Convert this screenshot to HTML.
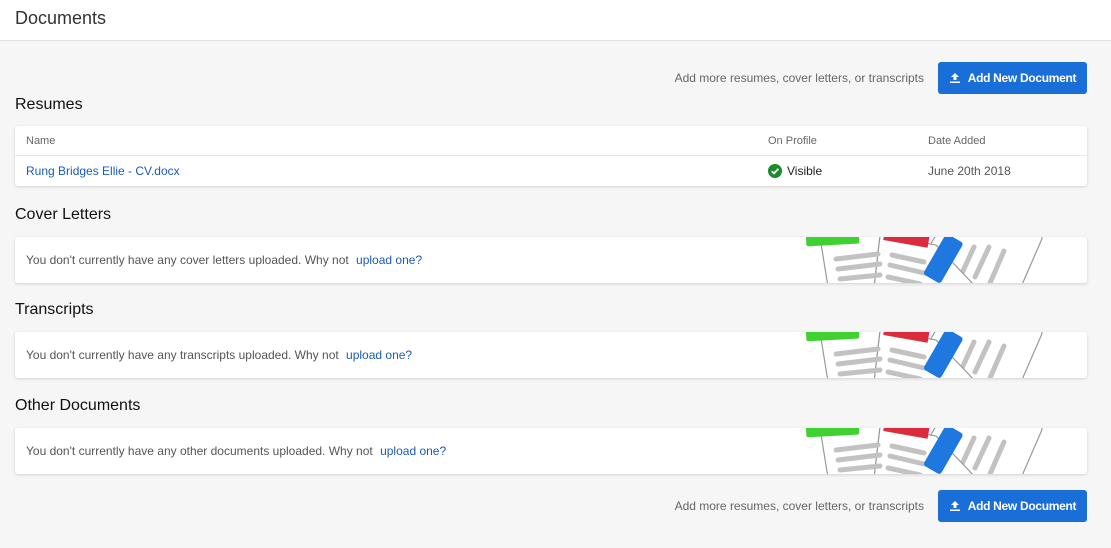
<!DOCTYPE html>
<html><head><meta charset="utf-8"><style>
*{margin:0;padding:0;box-sizing:border-box}
body{width:1111px;height:548px;background:#f6f6f6;font-family:"Liberation Sans",Arial,sans-serif;position:relative;overflow:hidden;color:#222}
.top{position:absolute;left:0;top:0;width:1111px;height:41px;background:#fff;border-bottom:1px solid #e2e2e2}
.top h1{position:absolute;left:15px;top:8px;font-size:18px;font-weight:normal;color:#333}
.addrow{position:absolute;right:24px;height:32px;display:flex;align-items:center}
.addrow span{font-size:12px;color:#666;margin-right:14px}
.btn{background:#1a6ed8;color:#fff;font-weight:bold;font-size:12px;height:32px;width:149px;border-radius:3px;display:flex;align-items:center;justify-content:center;letter-spacing:-0.3px}
.btn svg{margin-right:7px}
h2{position:absolute;left:15px;font-size:16px;font-weight:normal;color:#111}
.card{position:absolute;left:15px;width:1072px;background:#fff;border-radius:3px;box-shadow:0 1px 3px rgba(0,0,0,.15);overflow:hidden}
.th{height:30px;border-bottom:1px solid #e6e6e6;font-size:11px;color:#666;position:relative}
.th div,.tr div{position:absolute;top:0;line-height:30px}
.tr{height:30px;position:relative;font-size:12px}
a{color:#1a5bb8;text-decoration:none}
.empty{height:46px;font-size:12px;color:#555;line-height:46px;padding-left:11px}
.empty a{margin-left:4px}
.ill{position:absolute;left:761px;top:0}
</style></head><body>
<div class="top"><h1>Documents</h1></div>
<div class="addrow" style="top:62px"><span>Add more resumes, cover letters, or transcripts</span><div class="btn"><svg width="12" height="12" viewBox="0 0 12 12"><path d="M6 1L2 5h2.5v3h3V5H10z M1 9.5h10V11H1z" fill="#fff"/></svg>Add New Document</div></div>
<h2 style="top:96px">Resumes</h2>
<div class="card" style="top:126px;height:60px">
<div class="th"><div style="left:11px">Name</div><div style="left:753px">On Profile</div><div style="left:913px">Date Added</div></div>
<div class="tr"><div style="left:11px"><a>Rung Bridges Ellie - CV.docx</a></div>
<div style="left:753px;display:flex;align-items:center;height:30px"><svg width="14" height="14" viewBox="0 0 14 14" style="margin-right:5px"><circle cx="7" cy="7" r="7" fill="#1e8a2e"/><path d="M3.8 7.2l2.2 2.2 4.3-4.5" stroke="#fff" stroke-width="1.8" fill="none"/></svg>Visible</div>
<div style="left:913px;color:#555">June 20th 2018</div></div>
</div>
<h2 style="top:206px">Cover Letters</h2>
<div class="card" style="top:237px"><div class="empty">You don't currently have any cover letters uploaded. Why not <a>upload one?</a></div>ILL</div>
<h2 style="top:301px">Transcripts</h2>
<div class="card" style="top:332px"><div class="empty">You don't currently have any transcripts uploaded. Why not <a>upload one?</a></div>ILL</div>
<h2 style="top:397px">Other Documents</h2>
<div class="card" style="top:428px"><div class="empty">You don't currently have any other documents uploaded. Why not <a>upload one?</a></div>ILL</div>
<div class="addrow" style="top:490px"><span>Add more resumes, cover letters, or transcripts</span><div class="btn"><svg width="12" height="12" viewBox="0 0 12 12"><path d="M6 1L2 5h2.5v3h3V5H10z M1 9.5h10V11H1z" fill="#fff"/></svg>Add New Document</div></div>
<script>
var s='<svg class="ill" width="270" height="46" viewBox="0 0 270 46">'+
'<path d="M160 -2 L262 -2 Q268 -2 265 4 L245 50 L130 50 Z" fill="#fff" stroke="#999" stroke-width="1.2"/>'+
'<path d="M198 10 L186 36 M213 10 L199 40 M228 14 L214 46" stroke="#c2c2c2" stroke-width="5" stroke-linecap="round"/>'+
'<path d="M104 -2 L160 8 L200 50 L98 50 Z" fill="#fff" stroke="#999" stroke-width="1.2"/>'+
'<rect x="108" y="-8" width="45" height="14" fill="#dc2b3d" transform="rotate(10 125 0)"/>'+
'<path d="M116 18 L148 25 M114 28 L148 36 M112 40 L144 47" stroke="#c2c2c2" stroke-width="5" stroke-linecap="round"/>'+
'<path d="M44 0 L104 -2 L98 50 L52 50 Z" fill="#fff" stroke="#999" stroke-width="1.2"/>'+
'<rect x="30" y="-6" width="53" height="14" rx="2" fill="#3fd12f" transform="rotate(-3 55 0)"/>'+
'<path d="M60 22 L102 17 M62 32 L104 27 M64 42 L104 38" stroke="#c2c2c2" stroke-width="5" stroke-linecap="round"/>'+
'<rect x="157" y="-2" width="20" height="47" rx="3" fill="#1e78e0" transform="rotate(30 167 22)"/>'+
'</svg>';
document.querySelectorAll('.card').forEach(function(c){c.innerHTML=c.innerHTML.replace('ILL',s)});
</script>
</body></html>
